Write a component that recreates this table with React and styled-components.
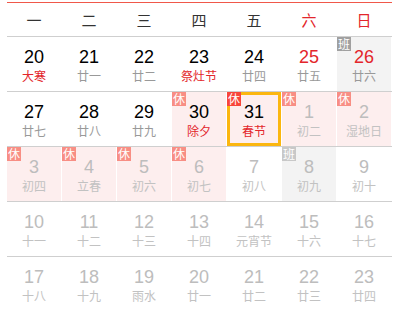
import React from 'react'
import styled, { createGlobalStyle, css } from 'styled-components'

const GlobalStyle = createGlobalStyle`
  body {
    margin: 0;
    background: #fff;
    font-family: "Liberation Sans", Arial, "Noto Sans CJK SC", sans-serif;
  }
`

const Calendar = styled.div`
  margin: 2px 0 0 7px;
  width: 385px;
  border-top: 1px solid #f0584a;
`

const WeekHeader = styled.div`
  display: grid;
  grid-template-columns: repeat(7, 55px);
  height: 33px;
  align-items: center;
`

const WeekDay = styled.div`
  width: 54px;
  text-align: center;
  font-family: "Noto Sans CJK SC", sans-serif;
  font-size: 15px;
  color: ${p => (p.$weekend ? '#e3262b' : '#333')};
`

const Row = styled.div`
  display: grid;
  grid-template-columns: repeat(7, 55px);
  border-top: 1px solid #cfcfcf;
`

const Cell = styled.div`
  position: relative;
  box-sizing: border-box;
  width: 54px;
  height: 54px;
  padding-top: 10px;
  text-align: center;
  background: ${p => (p.$holiday === 'rest' ? '#fdeeee' : p.$holiday === 'work' ? '#f3f3f3' : '#fff')};
  ${p => p.$selected && css`
    border: 3px solid #fbb60f;
    padding-top: 7px;
  `}
`

const Day = styled.div`
  font-size: 18px;
  line-height: 20px;
  color: ${p => (p.$dim ? '#bdbdbd' : p.$red ? '#e3262b' : '#000')};
`

const Lunar = styled.div`
  font-family: "Noto Sans CJK SC", sans-serif;
  font-size: 12px;
  line-height: 18px;
  color: ${p => (p.$dim ? '#c2c2c2' : p.$red ? '#e3262b' : '#999')};
`

const Badge = styled.span`
  position: absolute;
  top: ${p => (p.$inset ? '-3px' : '0')};
  left: ${p => (p.$inset ? '-3px' : '0')};
  width: 14px;
  height: 14px;
  font-family: "Noto Sans CJK SC", sans-serif;
  font-size: 12px;
  line-height: 14px;
  color: #fff;
  text-align: center;
  background: ${p => p.$bg};
`

const weekDays = ['一', '二', '三', '四', '五', '六', '日']

// d: day, l: lunar, n: next month, h: rest/work, r: red day, f: festival, s: selected
const weeks = [
  [
    { d: 20, l: '大寒', f: true },
    { d: 21, l: '廿一' },
    { d: 22, l: '廿二' },
    { d: 23, l: '祭灶节', f: true },
    { d: 24, l: '廿四' },
    { d: 25, l: '廿五', r: true },
    { d: 26, l: '廿六', r: true, h: 'work' },
  ],
  [
    { d: 27, l: '廿七' },
    { d: 28, l: '廿八' },
    { d: 29, l: '廿九' },
    { d: 30, l: '除夕', f: true, h: 'rest' },
    { d: 31, l: '春节', f: true, h: 'rest', s: true },
    { d: 1, l: '初二', n: true, h: 'rest' },
    { d: 2, l: '湿地日', n: true, h: 'rest' },
  ],
  [
    { d: 3, l: '初四', n: true, h: 'rest' },
    { d: 4, l: '立春', n: true, h: 'rest' },
    { d: 5, l: '初六', n: true, h: 'rest' },
    { d: 6, l: '初七', n: true, h: 'rest' },
    { d: 7, l: '初八', n: true },
    { d: 8, l: '初九', n: true, h: 'work' },
    { d: 9, l: '初十', n: true },
  ],
  [
    { d: 10, l: '十一', n: true },
    { d: 11, l: '十二', n: true },
    { d: 12, l: '十三', n: true },
    { d: 13, l: '十四', n: true },
    { d: 14, l: '元宵节', n: true },
    { d: 15, l: '十六', n: true },
    { d: 16, l: '十七', n: true },
  ],
  [
    { d: 17, l: '十八', n: true },
    { d: 18, l: '十九', n: true },
    { d: 19, l: '雨水', n: true },
    { d: 20, l: '廿一', n: true },
    { d: 21, l: '廿二', n: true },
    { d: 22, l: '廿三', n: true },
    { d: 23, l: '廿四', n: true },
  ],
]

function badgeColor(c) {
  if (c.h === 'work') return c.n ? '#c8c8c8' : '#a0a0a0'
  if (c.s) return '#f8453a'
  return '#f88e84'
}

function DayCell({ c }) {
  return (
    <Cell $holiday={c.h} $selected={c.s}>
      {c.h && (
        <Badge $bg={badgeColor(c)} $inset={c.s}>
          {c.h === 'rest' ? '休' : '班'}
        </Badge>
      )}
      <Day $dim={c.n} $red={c.r}>{c.d}</Day>
      <Lunar $dim={c.n} $red={c.f}>{c.l}</Lunar>
    </Cell>
  )
}

export default function App() {
  return (
    <>
      <GlobalStyle />
      <Calendar>
        <WeekHeader>
          {weekDays.map((w, i) => (
            <WeekDay key={w} $weekend={i > 4}>{w}</WeekDay>
          ))}
        </WeekHeader>
        {weeks.map((week, i) => (
          <Row key={i}>
            {week.map(c => (
              <DayCell key={`${c.n ? 'n' : 'c'}${c.d}`} c={c} />
            ))}
          </Row>
        ))}
      </Calendar>
    </>
  )
}
